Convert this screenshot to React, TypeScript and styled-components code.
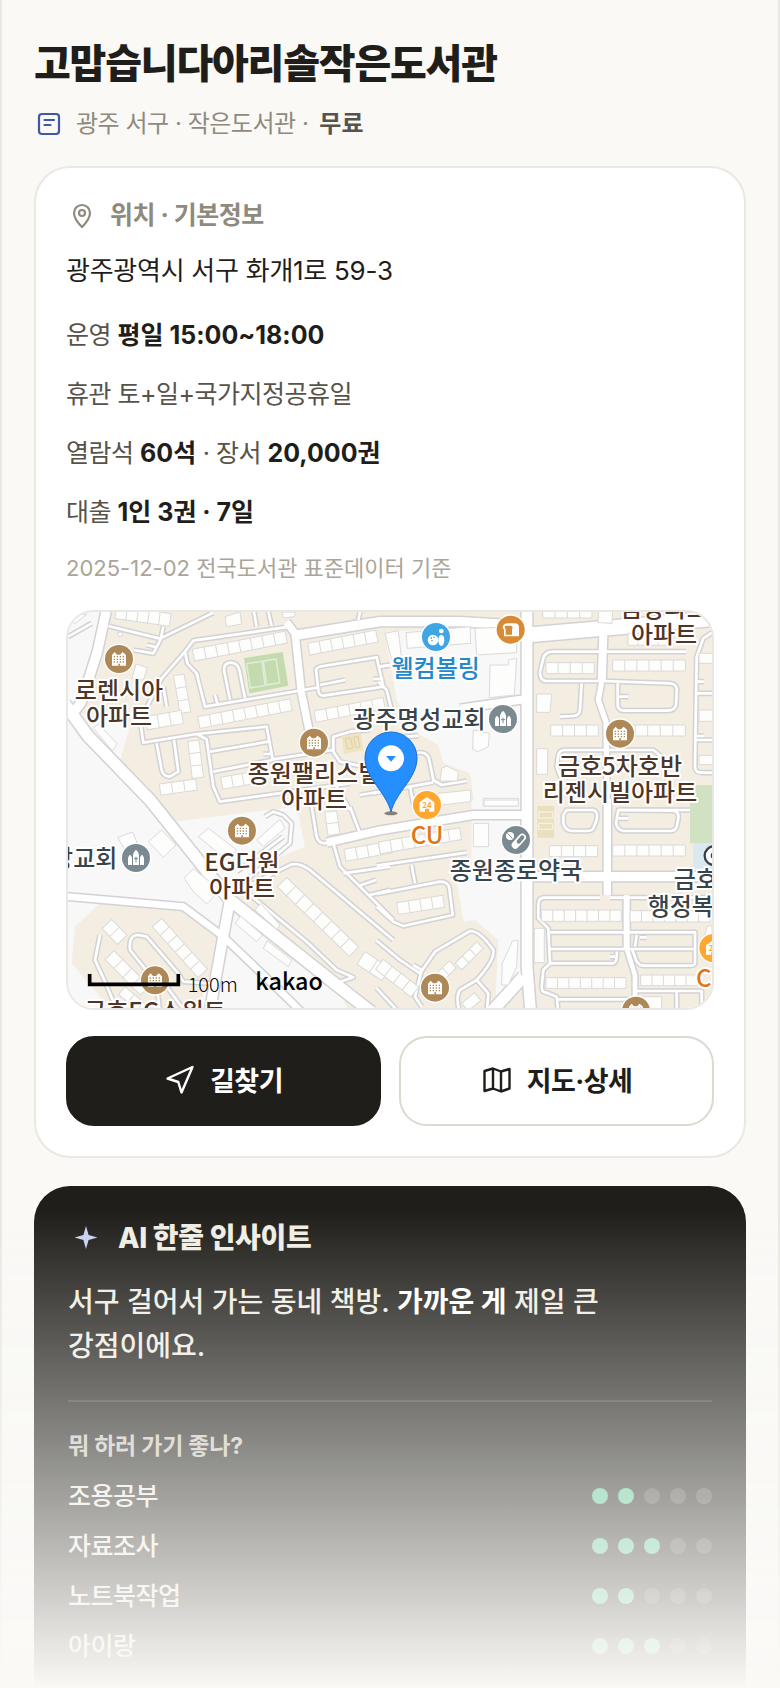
import React from 'react';
import styled, {createGlobalStyle} from 'styled-components';

const insights = [
    {label: '조용공부', score: 2},
    {label: '자료조사', score: 3},
    {label: '노트북작업', score: 2},
    {label: '아이랑', score: 3},
];

// x, y, length, depth, angle, cells
type Block = [number, number, number, number, number, number];

interface Sheet {
    x: number;
    y: number;
    land: string[];
    lanes: string[];
    houses: string[];
    blocks: Block[];
}

// the map is drawn in four sheets, three units to a pixel
const sheets: Sheet[] = [
    {
        x: -54, y: -36,
        land: [
            'M54 36H150L95 300L54 340Z',
            'M54 330L240 380L210 480L340 640H54Z',
        ],
        lanes: [
            'M54 110L125 70',
            'M175 78L330 116L490 38',
            'M340 80L332 118L310 160L250 150',
            'M290 135L322 142',
            'M720 80L430 122L405 155L335 235L270 360L280 428L440 402L470 418L490 560L510 605L900 550',
            'M405 155L412 190L440 220L465 320L760 270L805 262',
            'M540 300L522 210Q522 188 542 188Q562 188 568 210L585 295',
            'M612 36L620 80M655 36L665 78M930 36L925 60',
            'M495 285L502 310M350 320L340 260',
            'M440 402L650 380L668 478L850 450',
            'M480 455L655 425M490 515L668 480M640 462H662',
            'M320 430L335 510Q340 530 360 530L385 515L372 420',
            'M805 270L798 210Q800 200 820 198L980 172L1000 260L820 287Q806 287 805 270',
            'M810 255L885 240M1020 195L990 200M970 237H1000',
            'M850 455V410L900 395L960 390M850 455L870 485L940 500M820 490L900 630M930 585L1020 570',
        ],
        houses: [
            'M203 98L216 96L218 108L205 110Z',
            'M54 40L110 44L75 70L54 60Z',
            'M525 50L570 36L575 72L530 80Z',
            'M696 36H735L733 50L700 54Z',
            'M258 192L292 203L280 240L246 236Z',
            'M145 372L202 432L187 452L130 385Z',
        ],
        blocks: [
            [200, 18, 165, 38, 8, 5],
            [427, 148, 283, 36, -11, 8],
            [773, 130, 208, 36, -11, 6],
            [443, 350, 282, 36, -11, 8],
            [792, 333, 211, 34, -11, 6],
            [402, 222, 115, 32, 80, 3],
            [447, 420, 112, 34, 83, 3],
            [285, 350, 110, 40, -10, 3],
            [328, 552, 110, 34, -8, 3],
            [512, 532, 130, 36, -10, 4],
        ],
    },
    {
        x: 936, y: -36,
        land: ['M15 95L425 75V630H285L270 520L190 490L175 435L110 400L50 300Z'],
        lanes: [
            'M0 200L30 195M-5 245L20 270L35 330M60 412L115 407',
            'M105 460Q140 450 148 480L160 540L185 555L260 543M-20 580L160 547M90 560L100 610',
            'M918 155H520Q495 155 490 175L480 215Q480 243 500 243H670L870 250Q893 252 890 275L888 315Q885 332 860 332H730Q712 330 713 310V250',
            'M715 290H745M605 250L600 330Q598 347 580 348L540 350',
            'M1000 95L970 115L950 170L945 500Q945 518 965 518H1000',
            'M950 245H972M950 280H1000M950 408H972M950 420H1000',
            'M545 540L530 500L535 465Q538 450 555 450H820L845 470',
            'M720 630H930',
        ],
        houses: [
            'M78 98L270 80L272 130L82 145Z',
            'M285 85L410 80V158L290 165Z',
            'M330 195H385V180L410 175L403 285L328 293Z',
            'M280 390L328 400L325 440L295 455L278 448Z',
            'M470 282H515L510 337H470Z',
            'M310 595H415V618H310Z',
            'M185 505L200 498L235 515L232 543H180Z',
            'M155 582L272 570V605L160 618Z',
            'M15 100L55 92L65 180L38 190Z',
        ],
        blocks: [
            [488, 18, 148, 36, 0, 4],
            [656, 30, 42, 38, 3, 1],
            [498, 188, 145, 33, 0, 4],
            [698, 180, 218, 33, 0, 6],
            [512, 375, 143, 33, 0, 4],
            [690, 375, 226, 33, 0, 6],
            [470, 446, 33, 77, 0, 1],
            [744, 100, 120, 36, 0, 4],
            [957, 160, 60, 30, 0, 1],
            [957, 330, 60, 34, 0, 1],
            [957, 466, 60, 28, 0, 1],
        ],
    },
    {
        x: -54, y: 564,
        land: [
            'M54 0H290L540 300L520 410L400 320L54 290Z',
            'M54 290L150 310L75 380L65 490L180 625H54Z',
            'M370 65L740 20L765 140L640 190L560 290Z',
            'M550 340L880 600L900 640H440L520 400Z',
        ],
        lanes: [
            'M590 240L720 130L725 70L700 45L670 35L645 50M560 215L700 110',
            'M600 255L720 195Q745 185 780 210L1030 420',
            'M600 285L770 425L860 510L910 532L870 545',
            'M780 -10L800 110Q805 130 825 130L1020 90',
            'M850 130L870 200L960 290L1030 360M880 220L1020 200M925 258L978 240M960 285L1020 270M900 20L930 100',
            'M150 405L135 480L165 545L205 640',
            'M330 640L320 550L240 450Q235 405 265 405L290 410L385 520L400 545L480 550M350 560L410 640',
        ],
        houses: [
            'M203 112L248 96L262 130L225 150Z',
            'M295 125L335 90L378 135L340 172Z',
            'M402 235L430 206L510 270L470 312L430 275Z',
            'M445 110L475 85L560 150L530 180Z',
            'M620 120L690 58L705 85L640 140Z',
            'M572 348L637 405L620 425L555 370Z',
            'M652 422L725 480L715 500L640 445Z',
            'M632 310L690 375L680 388L615 330Z',
        ],
        blocks: [
            [192, 452, 150, 38, 45, 4],
            [335, 355, 205, 38, 48, 6],
            [185, 358, 66, 40, 46, 2],
            [710, 232, 300, 40, 44, 8],
            [945, 455, 90, 45, 33, 2],
            [882, 148, 140, 36, -10, 4],
            [860, 32, 70, 36, 82, 2],
            [225, 560, 110, 30, 40, 3],
        ],
    },
    {
        x: 936, y: 564,
        land: [
            'M275 0H430V520L345 620L355 420L285 360L250 365L230 240L275 200Z',
        ],
        lanes: [
            'M560 30H640Q655 35 650 60L640 85Q635 93 620 93H575Q555 90 550 70V45Z',
            'M715 30L880 32Q898 35 895 55L890 80Q885 93 870 93H730Q712 90 708 70Z',
            'M715 55H745',
            'M-10 197L260 158M95 195L105 250M-10 282L180 245Q205 245 208 265L218 345L70 378L40 365L-10 320',
            'M-10 422L60 480L120 520L165 455L270 393Q300 392 340 450Q345 480 290 540L240 570Q225 590 240 640',
            'M290 540L325 580L320 640M100 495L125 510L105 590L125 620M-10 565L60 640',
            'M660 293H490Q475 295 475 315V355L505 385L510 490L490 510L485 560Q485 577 500 578L530 590L535 640',
            'M510 397H945V490Q943 497 930 497H790Q770 495 765 470L755 445M510 447H940',
            'M510 490H700Q712 488 710 455M690 470H705M765 440L770 405M780 412H800',
            'M530 598H770M770 573H965V640M890 573V640M690 293H1000',
        ],
        houses: [
            'M398 422H414L410 500L385 555H365L367 490Z',
            'M312 0H415V18H312Z',
            'M765 590H845V640H765Z',
            'M980 380L996 376V410H975Z',
        ],
        blocks: [
            [508, 137, 145, 33, 0, 4],
            [698, 135, 218, 33, 0, 6],
            [484, 330, 240, 34, 0, 7],
            [750, 332, 240, 34, 0, 7],
            [498, 533, 240, 32, 0, 7],
            [782, 525, 170, 32, 0, 5],
            [463, 385, 30, 103, 0, 1],
            [280, 70, 46, 70, 0, 1],
            [50, 308, 140, 36, -9, 4],
            [-5, 126, 247, 36, -10, 7],
            [10, 478, 135, 38, 38, 4],
            [225, 490, 92, 28, -45, 3],
            [165, 525, 60, 30, -45, 2],
            [245, 610, 50, 30, -40, 1],
        ],
    },
];

const streets = [
    {d: 'M116 -10L88 120L40 270L10 310', width: 28},
    {d: 'M-10 275L60 372L246 564L486 864L806 1119L910 1200', width: 34},
    {d: 'M486 864L468 960L425 1200', width: 30},
    {d: 'M-10 853L346 884L466 974L660 1160L700 1200', width: 20},
    {d: 'M655 30L681 64L700 240L726 370', width: 22},
    {d: 'M681 70L936 29H1176L1366 40', width: 28},
    {d: 'M1391 68L1940 20', width: 44},
    {d: 'M1377 -10V1060L1388 1200', width: 32},
    {d: 'M1176 290L1366 262', width: 24},
    {d: 'M776 692L936 655L1216 609H1366', width: 24},
    {d: 'M1270 1200L1366 1094', width: 34},
    {d: 'M1391 794H1940', width: 28},
    {d: 'M1606 70L1601 210', width: 24},
    {d: 'M1601 210L1591 264L1614 330L1618 600', width: 16},
    {d: 'M1618 560V850', width: 22},
    {d: 'M1676 850V1010', width: 18},
    {d: 'M1676 1010L1701 1090V1180', width: 14},
];

const blockPath = ([, , length, depth, , cells]: Block) => {
    let d = `M0 0H${length}V${depth}H0Z`;
    for (let i = 1; i < cells; i++) {
        d += `M${(length / cells) * i} 0V${depth}`;
    }
    return d;
};

const glyphs = {
    apartment: (
        <>
            <path d="M-21 20V-12L-13 -21L-6 -13H3L11 -21L21 -12V20Z" fill="#fff"/>
            <path d="M-16 -7H17M-16 1H17M-16 9H17" stroke="#ae8957" strokeWidth="4" strokeDasharray="4 5"/>
            <path d="M-2 20V14H3V20Z" fill="#ae8957"/>
        </>
    ),
    church: (
        <>
            <path d="M-9 21V-10Q-8 -18 0 -25Q8 -18 9 -10V21ZM-24 21V0Q-22 -7 -18 -10Q-13 -7 -12 0V21ZM24 21V0Q22 -7 18 -10Q13 -7 12 0V21Z" fill="#fff"/>
            <path d="M0 -4V13M-6 2H6" stroke="#7b8a90" strokeWidth="3"/>
        </>
    ),
    bowling: (
        <>
            <circle cx="-9" cy="9" r="16" fill="#fff"/>
            <ellipse cx="16" cy="10" rx="9" ry="17" fill="#fff"/>
            <circle cx="16" cy="-18" r="7" fill="#fff"/>
            <path d="M-16 3H-12M-8 1H-4M-14 11H-10" stroke="#3fa5e5" strokeWidth="4"/>
        </>
    ),
    bread: (
        <>
            <path d="M-20 20V0Q-27 -6 -22 -13Q-18 -19 -10 -19H12Q26 -18 25 -6V18Q25 20 22 20Z" fill="#fff"/>
            <path d="M-15 15V-2Q-20 -6 -16 -12H2Q8 -8 4 -1V15Z" fill="#d98a35"/>
        </>
    ),
    store: (
        <>
            <path d="M-22 20V-8L0 -24L22 -8V20H6V13Q0 8 -6 13V20Z" fill="#fff"/>
            <text y="8" fontSize="24" fontWeight="700" fill="#ffa72f" textAnchor="middle">24</text>
        </>
    ),
    pharmacy: (
        <>
            <circle cx="-18" cy="-12" r="12" fill="#fff"/>
            <path d="M-25 -20L-11 -5" stroke="#7b8a90" strokeWidth="3"/>
            <path d="M-2 15L19 -8" stroke="#fff" strokeWidth="22" strokeLinecap="round"/>
            <path d="M8 5L19 -8" stroke="#7b8a90" strokeWidth="12" strokeLinecap="round"/>
        </>
    ),
};

const colors = {
    apartment: '#ae8957',
    church: '#7b8a90',
    bowling: '#3fa5e5',
    bread: '#d98a35',
    store: '#ffa72f',
    pharmacy: '#7b8a90',
};

type Kind = keyof typeof glyphs;

const places: { kind: Kind, x: number, y: number }[] = [
    {kind: 'apartment', x: 153, y: 141},
    {kind: 'apartment', x: 738, y: 392},
    {kind: 'apartment', x: 522, y: 656},
    {kind: 'apartment', x: 261, y: 1105},
    {kind: 'apartment', x: 1101, y: 1127},
    {kind: 'apartment', x: 1704, y: 1196},
    {kind: 'apartment', x: 1656, y: 365},
    {kind: 'church', x: 1305, y: 321},
    {kind: 'church', x: 204, y: 738},
    {kind: 'bowling', x: 1104, y: 75},
    {kind: 'bread', x: 1328, y: 53},
    {kind: 'store', x: 1077, y: 579},
    {kind: 'store', x: 1936, y: 1008},
    {kind: 'pharmacy', x: 1344, y: 684},
];

const brown = '#4e3525';
const slate = '#37444c';
const orange = '#e37410';

const names: { text: string, x: number, y: number, color: string, anchor?: 'start' | 'end' }[] = [
    {text: '로렌시아', x: 153, y: 261, color: brown},
    {text: '아파트', x: 153, y: 339, color: brown},
    {text: '종원팰리스빌', x: 738, y: 511, color: brown},
    {text: '아파트', x: 738, y: 589, color: brown},
    {text: 'EG더원', x: 522, y: 776, color: brown},
    {text: '아파트', x: 522, y: 854, color: brown},
    {text: '금호EG스위트', x: 261, y: 1224, color: brown},
    {text: '금강파크', x: 1790, y: 16, color: brown},
    {text: '아파트', x: 1788, y: 94, color: brown},
    {text: '금호5차호반', x: 1656, y: 488, color: brown},
    {text: '리젠시빌아파트', x: 1656, y: 566, color: brown},
    {text: '웰컴볼링', x: 1103, y: 194, color: '#2489cc'},
    {text: '광주명성교회', x: 1054, y: 347, color: slate},
    {text: '종원종로약국', x: 1344, y: 802, color: slate},
    {text: '랑교회', x: 148, y: 764, color: slate, anchor: 'end'},
    {text: '금호', x: 1817, y: 829, color: slate, anchor: 'start'},
    {text: '행정복지', x: 1739, y: 909, color: slate, anchor: 'start'},
    {text: 'CU', x: 1077, y: 697, color: orange},
    {text: 'CU', x: 1884, y: 1124, color: orange, anchor: 'start'},
];

const LibraryMap = () => (
    <MapSvg viewBox="0 0 1932 1188" preserveAspectRatio="xMidYMid slice" role="img" aria-label="도서관 주변 지도">
        <rect width="1932" height="1188" fill="#f4ede1"/>
        {sheets.map((sheet, i) => (
            <g key={i} transform={`translate(${sheet.x} ${sheet.y})`} fill="#f8f8f8">
                {sheet.land.map(d => <path key={d} d={d}/>)}
            </g>
        ))}
        <path d="M1866 519H1932V694H1866Z" fill="#d1e2c3"/>
        <path d="M1876 694H1932V770H1876Z" fill="#dbe8f0"/>
        <path d="M1408 582H1458V677H1408Z" fill="#eadfbe"/>
        <path d="M1412 600H1454V618H1412ZM1412 634H1454V652H1412Z" fill="none" stroke="#f6efdc" strokeWidth="4"/>

        <g fill="none" stroke="#d2d2d4" strokeLinejoin="round">
            {streets.map(({d, width}) => <path key={d} d={d} strokeWidth={width + 9}/>)}
            {sheets.map((sheet, i) => (
                <g key={i} transform={`translate(${sheet.x} ${sheet.y})`} strokeWidth="17">
                    {sheet.lanes.map(d => <path key={d} d={d}/>)}
                </g>
            ))}
        </g>
        <g fill="none" stroke="#fff" strokeLinejoin="round">
            {streets.map(({d, width}) => <path key={d} d={d} strokeWidth={width}/>)}
            {sheets.map((sheet, i) => (
                <g key={i} transform={`translate(${sheet.x} ${sheet.y})`} strokeWidth="8">
                    {sheet.lanes.map(d => <path key={d} d={d}/>)}
                </g>
            ))}
        </g>
        {sheets.map((sheet, i) => (
            <g key={i} transform={`translate(${sheet.x} ${sheet.y})`} fill="#fdfdfc" stroke="#dadada" strokeWidth="3">
                {sheet.houses.map(d => <path key={d} d={d}/>)}
                {sheet.blocks.map(block => (
                    <path key={block.join()} d={blockPath(block)}
                          transform={`translate(${block[0]} ${block[1]}) rotate(${block[4]})`}/>
                ))}
            </g>
        ))}

        <path d="M528 138L644 120L661 221L544 244Z" fill="#c4dbb0"/>
        <path d="M536 155L582 148L591 220L547 228ZM586 147L624 141L635 212L596 219Z"
              fill="none" stroke="#e3eed8" strokeWidth="4"/>
        <path d="M821 372L878 364L886 414L828 426Z" fill="#efe3c2"/>
        <path d="M832 380L848 377L854 408L838 412ZM858 376L870 374L876 404L862 407Z"
              fill="none" stroke="#dfd0a8" strokeWidth="3"/>

        {places.map(({kind, x, y}) => (
            <g key={`${x}-${y}`} transform={`translate(${x} ${y})`}>
                <circle r="46" fill="#fff"/>
                <circle r="42" fill={colors[kind]}/>
                {glyphs[kind]}
            </g>
        ))}
        <g>
            <circle cx="1938" cy="731" r="28" fill="#fff" stroke={slate} strokeWidth="7"/>
            <circle cx="1938" cy="731" r="10" fill={slate}/>
        </g>
        <g fontSize="72" fontWeight="500" stroke="#fff" strokeWidth="12" strokeLinejoin="round" paintOrder="stroke">
            {names.map(({text, x, y, color, anchor = 'middle'}) => (
                <text key={`${x}-${y}`} x={x} y={y} fill={color} textAnchor={anchor}>{text}</text>
            ))}
        </g>

        <ellipse cx="969" cy="604" rx="20" ry="6" fill="#000" opacity=".45"/>
        <path d="M969 600C955 540 891 500 891 438A78 78 0 0 1 1047 438C1047 500 983 540 969 600Z"
              fill="#258fff" stroke="#1a6fd0" strokeWidth="3"/>
        <circle cx="969" cy="439" r="39" fill="#fff"/>
        <path d="M954 432H984L969 449Z" fill="#258fff"/>

        <path d="M65 1086V1117H331V1086" fill="none" stroke="#000" strokeWidth="11"/>
        <text x="359" y="1139" fontSize="60" fontWeight="300">100m</text>
        <text x="562" y="1134" fontSize="70" fontWeight="500">kakao</text>
    </MapSvg>
);

const App = () => (
    <>
        <GlobalStyle/>
        <Page>
            <header>
                <Title>고맙습니다아리솔작은도서관</Title>
                <Meta>
                    <svg width="30" height="30" viewBox="0 0 30 30" fill="none" stroke="#3f58a8" strokeWidth="2.2"
                         strokeLinecap="round" aria-hidden="true">
                        <rect x="5" y="5" width="20" height="20" rx="3"/>
                        <path d="M10.5 11H20M10.5 16H16.5"/>
                    </svg>
                    <span>광주 서구 · 작은도서관 · </span>
                    <Fee>무료</Fee>
                </Meta>
            </header>

            <Card>
                <CardTitle>
                    <svg width="32" height="32" viewBox="0 0 32 32" fill="none" stroke="currentColor" strokeWidth="2.2"
                         strokeLinejoin="round" aria-hidden="true">
                        <path d="M16 27C20 23 24 18 24 13A8 8 0 0 0 8 13C8 18 12 23 16 27Z"/>
                        <circle cx="16" cy="13" r="3"/>
                    </svg>
                    위치 · 기본정보
                </CardTitle>
                <Address>광주광역시 서구 화개1로 59-3</Address>
                <Facts>
                    <li>운영 <b>평일 15:00~18:00</b></li>
                    <li>휴관 토+일+국가지정공휴일</li>
                    <li>열람석 <b>60석</b> · 장서 <b>20,000권</b></li>
                    <li>대출 <b>1인 3권 · 7일</b></li>
                </Facts>
                <Source>2025-12-02 전국도서관 표준데이터 기준</Source>
                <MapFrame>
                    <LibraryMap/>
                </MapFrame>
                <Actions>
                    <Button type="button" $primary>
                        <svg width="32" height="32" viewBox="0 0 32 32" fill="none" stroke="currentColor"
                             strokeWidth="2.4" strokeLinejoin="round" aria-hidden="true">
                            <path d="M28.5 3L17.5 28.5L14.3 18L3.5 14.5Z"/>
                        </svg>
                        길찾기
                    </Button>
                    <Button type="button">
                        <svg width="32" height="32" viewBox="0 0 32 32" fill="none" stroke="currentColor"
                             strokeWidth="2.4" strokeLinejoin="round" aria-hidden="true">
                            <path d="M3.5 7L12 4.5L20 7.5L28.5 5V24.5L20 27.5L12 24.5L3.5 27ZM12 4.5V24.5M20 7.5V27.5"/>
                        </svg>
                        지도·상세
                    </Button>
                </Actions>
            </Card>

            <Insight>
                <InsightTitle>
                    <svg width="36" height="36" viewBox="0 0 36 36" fill="#c7d2f2" aria-hidden="true">
                        <path d="M18 6L20.6 14.9L29.5 17.5L20.6 20.1L18 29L15.4 20.1L6.5 17.5L15.4 14.9Z"/>
                    </svg>
                    AI 한줄 인사이트
                </InsightTitle>
                <Summary>서구 걸어서 가는 동네 책방. <b>가까운 게</b> 제일 큰 강점이에요.</Summary>
                <Scores>
                    <Question>뭐 하러 가기 좋나?</Question>
                    {insights.map(({label, score}) => (
                        <ScoreRow key={label}>
                            {label}
                            <Dots role="img" aria-label={`${score} / 5`}>
                                {[1, 2, 3, 4, 5].map(n => <Dot key={n} $on={n <= score}/>)}
                            </Dots>
                        </ScoreRow>
                    ))}
                </Scores>
            </Insight>
            <Fade/>
        </Page>
    </>
);

export default App;


const GlobalStyle = createGlobalStyle`
  * {
    box-sizing: border-box;
    margin: 0;
    padding: 0;
    letter-spacing: -0.02em;
  }

  body {
    background: #faf9f6;
    color: #1f1e1a;
    font-family: Inter, "Noto Sans CJK KR", sans-serif;
    font-size: 25px;
    word-break: keep-all;
  }

  b {
    letter-spacing: normal;
  }

  svg {
    flex: none;
  }

  text {
    letter-spacing: normal;
  }
`

const Page = styled.main`
  display: flex;
  flex-direction: column;
  min-height: 100vh;
  padding: 38px 32px 0;
  border: solid #eae8e2;
  border-width: 0 2px;
`

const Title = styled.h1`
  font-size: 40px;
  font-weight: 800;
  line-height: 52px;
  letter-spacing: -0.03em;
`

const Meta = styled.p`
  display: flex;
  align-items: center;
  margin: 17px 0 26px;
  font-size: 24px;
  line-height: 33px;
  color: #8f8a7e;

  svg {
    margin-right: 12px;
  }
`

const Fee = styled.b`
  margin-left: 11px;
  font-weight: 600;
  color: #57534a;
`

const Card = styled.section`
  padding: 30px;
  border: 2px solid #eae8e2;
  border-radius: 36px;
  background: #fff;
`

const CardTitle = styled.h2`
  display: flex;
  align-items: center;
  gap: 12px;
  font-size: 25px;
  font-weight: 700;
  line-height: 35px;
  color: #8f8a7e;
`

const Address = styled.p`
  margin-top: 18px;
  font-size: 26px;
  line-height: 40px;
  letter-spacing: -0.01em;
`

const Facts = styled.ul`
  display: grid;
  gap: 17px;
  margin-top: 23px;
  list-style: none;
  line-height: 42px;
  color: #57534a;

  b {
    font-weight: 700;
    color: #1f1e1a;
  }
`

const Source = styled.p`
  margin-top: 18px;
  font-size: 22px;
  line-height: 34px;
  letter-spacing: normal;
  color: #aba598;
`

const MapFrame = styled.div`
  height: 400px;
  margin-top: 25px;
  overflow: hidden;
  border: 2px solid #eae8e2;
  border-radius: 28px;
`

const MapSvg = styled.svg`
  display: block;
  width: 100%;
  height: 100%;
  font-family: "Noto Sans CJK KR", sans-serif;
`

const Actions = styled.div`
  display: grid;
  grid-template-columns: 1fr 1fr;
  gap: 18px;
  margin-top: 26px;
`

const Button = styled.button<{ $primary?: boolean }>`
  display: flex;
  justify-content: center;
  align-items: center;
  gap: 14px;
  height: 90px;
  padding-bottom: 3px;
  border: 2px solid ${({$primary}) => $primary ? '#1f1e1a' : '#dcd9d0'};
  border-radius: 28px;
  background: ${({$primary}) => $primary ? '#1f1e1a' : '#fff'};
  color: ${({$primary}) => $primary ? '#fff' : '#1f1e1a'};
  font: inherit;
  font-size: 27px;
  font-weight: 700;
`

const Insight = styled.section`
  flex: 1;
  margin-top: 28px;
  padding: 34px 34px 20px;
  border-radius: 36px 36px 0 0;
  background: #1f1e1a;
  color: #f0ede4;
`

const InsightTitle = styled.h2`
  display: flex;
  align-items: center;
  gap: 14px;
  font-size: 28px;
  font-weight: 800;
  line-height: 36px;
  letter-spacing: -0.01em;
`

const Summary = styled.p`
  margin-top: 24px;
  font-size: 28px;
  font-weight: 500;
  line-height: 44px;
  letter-spacing: normal;

  b {
    font-weight: 700;
    color: #fff;
  }
`

const Scores = styled.div`
  display: grid;
  gap: 16px;
  margin-top: 32px;
  padding-top: 28px;
  border-top: 2px solid #3a3934;
`

const Question = styled.h3`
  font-size: 23px;
  font-weight: 700;
  line-height: 33px;
  letter-spacing: -0.01em;
  color: #c9c5ba;
`

const ScoreRow = styled.div`
  display: flex;
  justify-content: space-between;
  align-items: center;
  font-size: 25px;
  font-weight: 500;
  line-height: 34px;
`

const Dots = styled.span`
  display: flex;
  gap: 10px;
`

const Dot = styled.i<{ $on: boolean }>`
  width: 16px;
  height: 16px;
  border-radius: 50%;
  background: ${({$on}) => $on ? '#57c794' : '#44433e'};
`

const Fade = styled.div`
  position: fixed;
  right: 0;
  bottom: 0;
  left: 0;
  height: 480px;
  background: linear-gradient(rgba(250, 249, 246, 0), #faf9f6);
  pointer-events: none;
`
